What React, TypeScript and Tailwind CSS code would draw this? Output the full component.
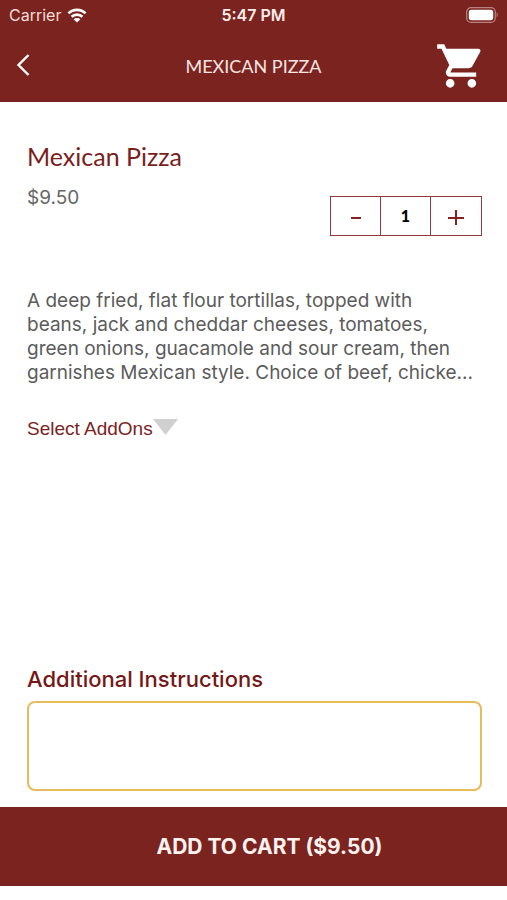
import { useState } from "react";

function StatusBar() {
  return (
    <div className="grid h-[30px] grid-cols-3 items-center px-[9px] text-[16px] leading-5 text-[#f3dcd8]">
      <div className="flex items-center gap-[6px]">
        <span>Carrier</span>
        <svg className="h-[15px] w-5" viewBox="0 0 20 15" aria-hidden="true">
          <path d="M1.4 5.4a12.3 12.3 0 0 1 17.2 0M4.6 8.8a7.7 7.7 0 0 1 10.8 0" fill="none" stroke="#fff" strokeWidth="2.6" />
          <path d="M10 14.6 6.6 11.3a4.9 4.9 0 0 1 6.8 0z" fill="#fff" />
        </svg>
      </div>
      <span className="text-center font-semibold text-[#fbeeec]">5:47 PM</span>
      <svg className="h-4 w-[33px] justify-self-end" viewBox="0 0 33 16" aria-hidden="true">
        <rect x="1.7" y="0.7" width="28.6" height="14.6" rx="4.4" fill="none" stroke="#b88682" strokeWidth="1.2" />
        <rect x="3.8" y="2.8" width="24.4" height="10.4" rx="2.6" fill="#fff" />
        <path d="M31.6 5.6c1.4.6 1.4 4.2 0 4.8z" fill="#b88682" />
      </svg>
    </div>
  );
}

function Header() {
  return (
    <header className="bg-[#7b231f] text-white">
      <StatusBar />
      <nav className="grid h-[72px] grid-cols-[1fr_auto_1fr] items-center px-5">
        <button type="button" aria-label="Back" className="-ml-2 justify-self-start p-1">
          <svg className="h-6 w-[14px]" viewBox="0 0 14 24" aria-hidden="true">
            <path d="M12.500 1 2.500 11l10 10" fill="none" stroke="#fff" strokeWidth="2.4" />
          </svg>
        </button>
        <h1 className="font-['Lato','Liberation_Sans',sans-serif] text-[18px] leading-6 text-[#f8e6e3]">MEXICAN PIZZA</h1>
        <button type="button" aria-label="Cart" className="justify-self-end">
          <svg className="h-[52px] w-[52px]" viewBox="0 0 24 24" fill="#fff" aria-hidden="true">
            <path d="M7 18c-1.100 0-1.990.9-1.990 2S5.900 22 7 22s2-.9 2-2-.9-2-2-2zM1 2v2h2l3.600 7.590-1.350 2.450c-.16.280-.25.610-.25.960 0 1.100.9 2 2 2h12v-2H7.420c-.14 0-.25-.11-.25-.25l.03-.12.900-1.630h7.450c.75 0 1.410-.41 1.750-1.030l3.580-6.490A1.003 1.003 0 0 0 20 4H5.210l-.94-2H1zm16 16c-1.100 0-1.990.9-1.990 2s.89 2 1.990 2 2-.9 2-2-.9-2-2-2z" />
          </svg>
        </button>
      </nav>
    </header>
  );
}

function QuantityPicker({ value, onChange }: { value: number; onChange: (next: number) => void }) {
  return (
    <div className="mt-[10px] grid h-10 w-[152px] grid-cols-3 divide-x border border-[#8f3a3c]">
      <button type="button" aria-label="Decrease quantity" onClick={() => onChange(Math.max(1, value - 1))} className="flex items-center justify-center border-[#8f3a3c]">
        <svg className="h-[18px] w-4" viewBox="0 0 16 18" aria-hidden="true">
          <path d="M3 11h10" stroke="#85201f" strokeWidth="2" />
        </svg>
      </button>
      <output className="flex items-center justify-center border-[#8f3a3c] font-['Lato','Liberation_Sans',sans-serif] text-[16px] font-black text-black">{value}</output>
      <button type="button" aria-label="Increase quantity" onClick={() => onChange(value + 1)} className="flex items-center justify-center">
        <svg className="h-[18px] w-4" viewBox="0 0 16 18" aria-hidden="true">
          <path d="M0 11h16M8 3v15" stroke="#85201f" strokeWidth="2" />
        </svg>
      </button>
    </div>
  );
}

export default function App() {
  const [quantity, setQuantity] = useState(1);
  const total = (9.5 * quantity).toFixed(2);

  return (
    <div className="flex min-h-screen flex-col bg-white pb-[14px] font-['Inter','Liberation_Sans',sans-serif]">
      <Header />
      <main className="flex flex-1 flex-col pt-[38px] pr-[25px] pb-4 pl-[27px]">
        <h2 className="font-['Lato','Liberation_Sans',sans-serif] text-[25px] leading-8 text-[#7b1e1c]">Mexican Pizza</h2>
        <div className="mt-[14px] flex items-start justify-between">
          <p className="text-[19px] leading-6 text-[#666]">$9.50</p>
          <QuantityPicker value={quantity} onChange={setQuantity} />
        </div>
        <p className="mt-[53px] pr-2 text-[19px] leading-6 text-[#5c5c5c]">
          A deep fried, flat flour tortillas, topped with beans, jack and cheddar cheeses, tomatoes, green onions, guacamole and sour cream, then garnishes Mexican style. Choice of beef, chicke...
        </p>
        <button type="button" className="mt-8 flex items-start self-start font-['Liberation_Sans',sans-serif] text-[19px] leading-6 text-[#7b231f]">
          Select AddOns
          <svg className="mt-[2px] h-4 w-[25px]" viewBox="0 0 25 16" aria-hidden="true">
            <path d="M0 0h25L12.5 16z" fill="#d0d0d0" />
          </svg>
        </button>
        <div className="mt-auto flex flex-col">
          <label htmlFor="instructions" className="text-[22px] leading-7 font-medium text-[#751817]">
            Additional Instructions
          </label>
          <textarea id="instructions" className="mt-2 h-[90px] resize-none rounded-lg border-2 border-[#e6bc5c] p-2 text-[18px] text-[#5c5c5c] outline-none" />
        </div>
      </main>
      <button type="button" className="h-[79px] bg-[#7b231f] pl-8 text-[21px] leading-7 font-bold text-[#fdf3f1]">
        ADD TO CART (${total})
      </button>
    </div>
  );
}
